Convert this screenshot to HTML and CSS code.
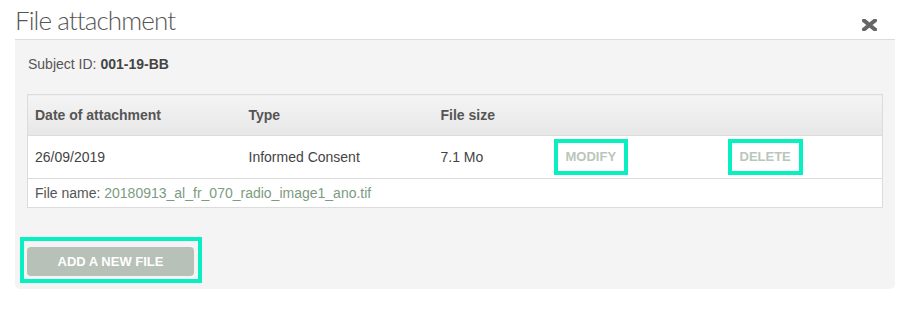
FILE: index.html
```html
<!DOCTYPE html>
<html lang="en">
<head>
	<meta charset="UTF-8">
	<title>File attachment</title>
	<link rel="stylesheet" href="styles.css">
</head>
<body>
	<div id="dialog">
		<div class="head">
			<h1 class="title">File attachment</h1>
			<div class="close">
				<svg width="15" height="12" viewBox="0 0 15 12">
					<path d="M2 1.5 L13 10.5 M13 1.5 L2 10.5" stroke="#666" stroke-width="4" stroke-linecap="square"/>
				</svg>
			</div>
		</div>

		<div class="panel">
			<div class="subject">Subject ID: <b>001-19-BB</b></div>

			<table class="files">
				<tr class="th">
					<td class="c1">Date of attachment</td>
					<td class="c2">Type</td>
					<td class="c3">File size</td>
					<td class="c4"></td>
					<td></td>
				</tr>
				<tr class="row">
					<td>26/09/2019</td>
					<td>Informed Consent</td>
					<td>7.1 Mo</td>
					<td><span class="act">MODIFY</span></td>
					<td><span class="act">DELETE</span></td>
				</tr>
				<tr class="fname">
					<td colspan="5">File name: <a href="#">20180913_al_fr_070_radio_image1_ano.tif</a></td>
				</tr>
			</table>

			<div class="addwrap">
				<div class="add">ADD A NEW FILE</div>
			</div>
		</div>
	</div>
</body>
</html>
```

FILE: styles.css
```css
*{
	padding: 0;
	margin: 0;
	box-sizing: border-box;
}
body{
	background-color: white;
	font-family: "Liberation Sans", Arial, sans-serif;
	color: #444;
}
#dialog{
	width: 907px;
}
.head{
	display: flex;
	justify-content: space-between;
	align-items: flex-start;
	height: 39px;
	padding: 0 30px 0 15px;
}
.title{
	font-family: Lato, sans-serif;
	font-weight: 300;
	font-size: 26px;
	line-height: 30px;
	padding-top: 5px;
	letter-spacing: -0.9px;
	color: #555;
}
.close{
	padding-top: 19px;
	line-height: 0;
}
.panel{
	margin: 0 12px 0 15px;
	background-color: #f4f4f4;
	border-top: 1px #dcdcdc solid;
	border-radius: 0 0 5px 5px;
	padding: 14px 12px 6px 12px;
}
.subject{
	font-size: 14px;
	line-height: 20px;
	color: #555;
	padding-left: 1px;
	margin-bottom: 20px;
}
.subject b{
	color: #444;
}
.files{
	width: 100%;
	border-collapse: collapse;
	border: 1px #dcdcdc solid;
	background-color: white;
	font-size: 14px;
	table-layout: fixed;
}
.files td{
	padding: 0 7px;
	border-bottom: 1px #dcdcdc solid;
}
.th td{
	height: 41px;
	font-weight: bold;
	color: #555;
	background: linear-gradient(#f4f4f4, #e7e7e7);
}
.c1{ width: 214px; }
.c2{ width: 192px; }
.c3{ width: 113px; }
.c4{ width: 174px; }
.row td{
	height: 43px;
	color: #444;
}
.act{
	display: inline-block;
	border: 4px #08f0c2 solid;
	padding: 6px 8px;
	line-height: 16px;
	font-size: 13px;
	font-weight: bold;
	color: #bac6bb;
}
.fname td{
	height: 29px;
	color: #555;
}
.fname a{
	color: #7c9b82;
	text-decoration: none;
}
.addwrap{
	display: inline-block;
	margin: 29px 0 0 -7px;
	border: 4px #08f0c2 solid;
	padding: 6px 4px 3px 3px;
}
.add{
	width: 167px;
	height: 29px;
	line-height: 29px;
	background-color: #b7c1b8;
	border-radius: 4px;
	color: white;
	font-size: 13px;
	font-weight: bold;
	text-align: center;
}
```
